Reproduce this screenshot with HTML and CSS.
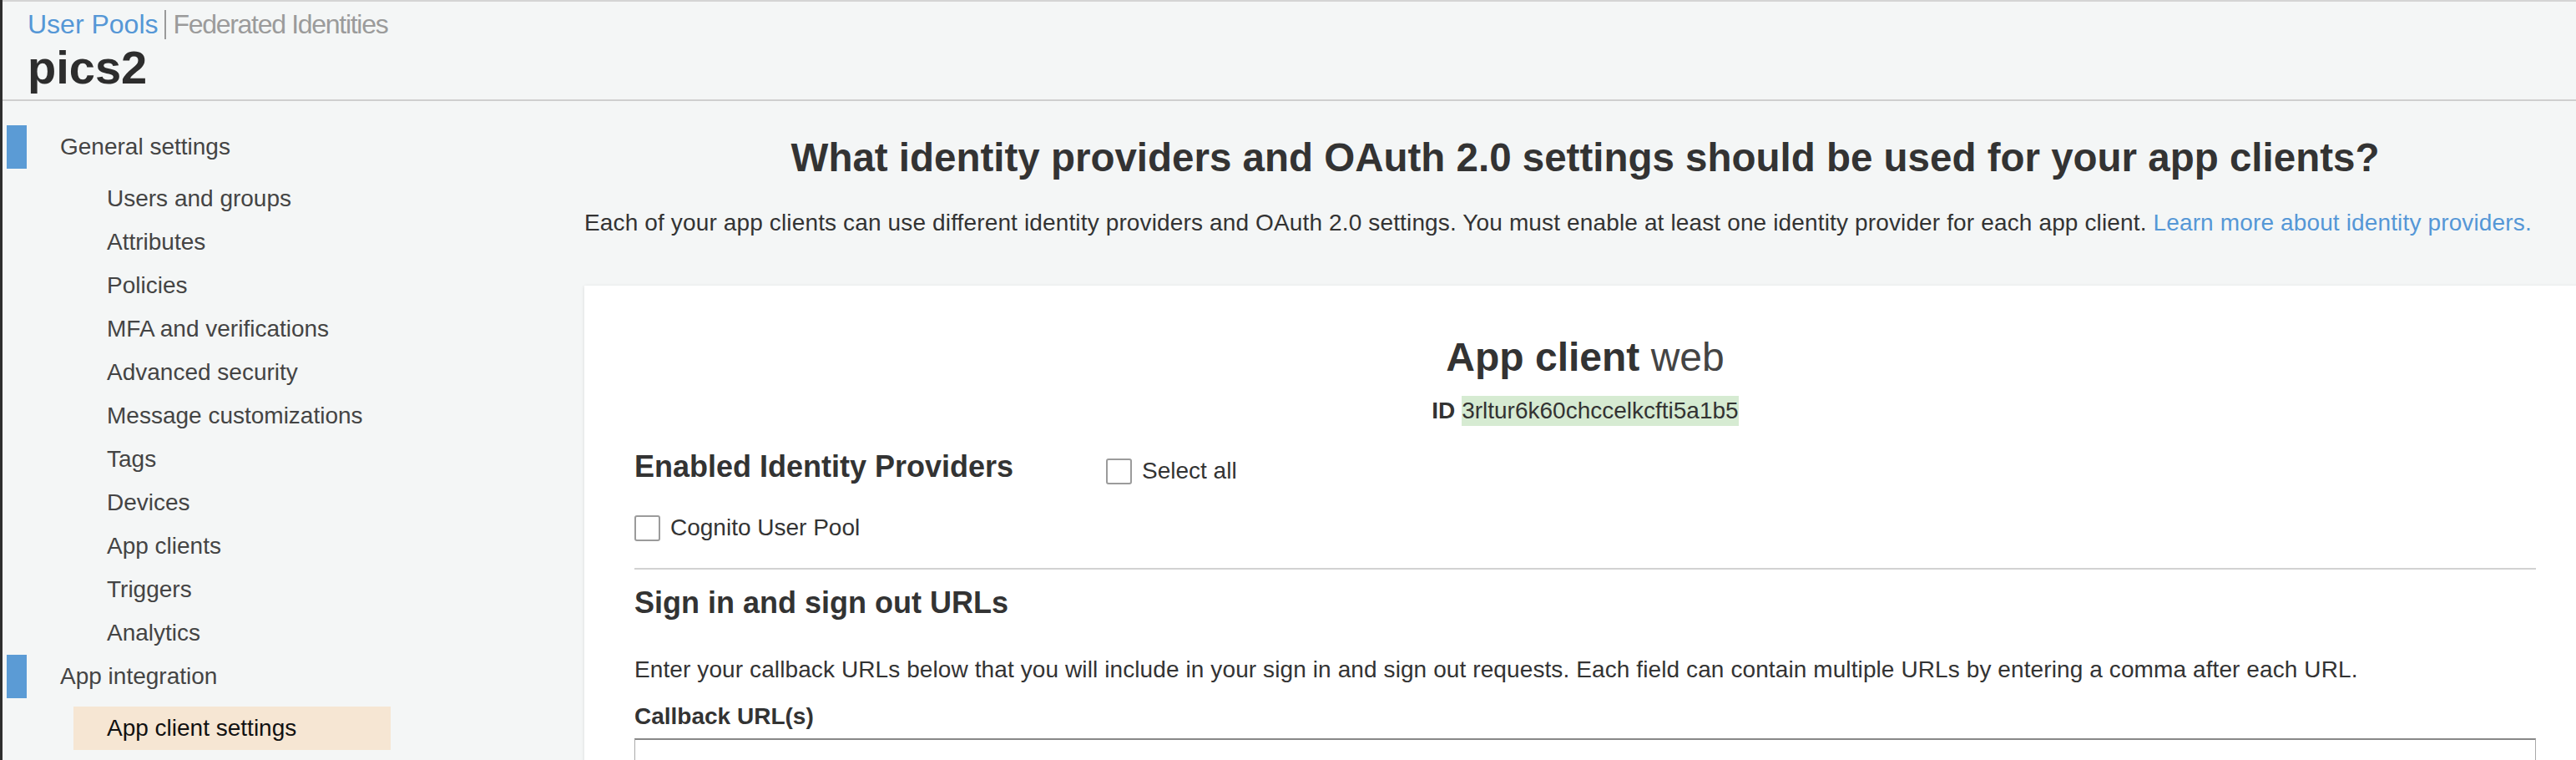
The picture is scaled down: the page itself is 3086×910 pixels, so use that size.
FILE: index.html
```html
<!DOCTYPE html>
<html lang="en">
<head>
<meta charset="utf-8">
<title>pics2 - App client settings</title>
<link rel="stylesheet" href="styles.css">
</head>
<body>
<div class="page">
  <header class="top">
    <div class="crumbs">
      <a class="crumb-active">User Pools</a><span class="crumb-sep"></span><span class="crumb">Federated Identities</span>
    </div>
    <h1 class="pool-name">pics2</h1>
  </header>
  <div class="layout">
    <nav class="sidebar">
      <div class="nav-section"><span class="nav-bar"></span><span class="nav-section-label">General settings</span></div>
      <ul class="nav-list">
        <li class="nav-item">Users and groups</li>
        <li class="nav-item">Attributes</li>
        <li class="nav-item">Policies</li>
        <li class="nav-item">MFA and verifications</li>
        <li class="nav-item">Advanced security</li>
        <li class="nav-item">Message customizations</li>
        <li class="nav-item">Tags</li>
        <li class="nav-item">Devices</li>
        <li class="nav-item">App clients</li>
        <li class="nav-item">Triggers</li>
        <li class="nav-item">Analytics</li>
      </ul>
      <div class="nav-section"><span class="nav-bar"></span><span class="nav-section-label">App integration</span></div>
      <ul class="nav-list">
        <li class="nav-item active">App client settings</li>
      </ul>
    </nav>
    <main class="main">
      <h2 class="page-title">What identity providers and OAuth 2.0 settings should be used for your app clients?</h2>
      <p class="page-desc">Each of your app clients can use different identity providers and OAuth 2.0 settings. You must enable at least one identity provider for each app client. <a class="link">Learn more about identity providers.</a></p>
      <section class="card">
        <h3 class="client-name"><strong>App client</strong> web</h3>
        <div class="client-id"><b>ID</b> <span class="id-value">3rltur6k60chccelkcfti5a1b5</span></div>
        <div class="idp-row">
          <h4 class="idp-title">Enabled Identity Providers</h4>
          <label class="check"><span class="box"></span>Select all</label>
        </div>
        <label class="check cognito"><span class="box"></span>Cognito User Pool</label>
        <hr class="divider">
        <h4 class="section-title">Sign in and sign out URLs</h4>
        <p class="help">Enter your callback URLs below that you will include in your sign in and sign out requests. Each field can contain multiple URLs by entering a comma after each URL.</p>
        <div class="field-label">Callback URL(s)</div>
        <div class="input"></div>
      </section>
    </main>
  </div>
</div>
</body>
</html>
```

FILE: styles.css
```css
html, body {
  margin: 0;
  padding: 0;
  overflow: hidden;
}

body {
  background: #f4f6f6;
  font-family: "Liberation Sans", Arial, Helvetica, sans-serif;
  color: #333;
}

.page {
  border-left: 3px solid #2e2e2e;
  min-height: 910px;
  box-sizing: border-box;
}

/* Header */
.top {
  border-top: 2px solid #d4d4d4;
  border-bottom: 2px solid #cfcfcf;
  padding: 7px 0 8px 30px;
}

.crumbs {
  display: flex;
  align-items: center;
  height: 40px;
  font-size: 32px;
  line-height: 40px;
}

.crumb-active {
  color: #5597d6;
}

.crumb-sep {
  width: 2px;
  height: 35px;
  background: #9a9a9a;
  margin: 0 9px 0 7px;
}

.crumb {
  color: #9b9b9b;
  letter-spacing: -1.3px;
}

.pool-name {
  margin: 2px 0 0;
  font-size: 56px;
  line-height: 60px;
  font-weight: bold;
  color: #2d2d2d;
}

/* Layout */
.layout {
  display: flex;
  width: 3095px;
}

/* Sidebar */
.sidebar {
  flex: none;
  width: 697px;
  padding: 29px 0 0 5px;
  box-sizing: border-box;
}

.nav-section {
  display: flex;
  align-items: center;
  height: 52px;
  margin-bottom: 10px;
  font-size: 28px;
  line-height: 52px;
  color: #444;
}

.nav-bar {
  flex: none;
  width: 24px;
  height: 52px;
  background: #5b9bd5;
  margin-right: 40px;
}

.nav-list {
  list-style: none;
  margin: 0;
  padding: 0;
}

.nav-item {
  margin-left: 80px;
  width: 380px;
  box-sizing: border-box;
  padding-left: 40px;
  height: 52px;
  line-height: 52px;
  font-size: 28px;
  color: #444;
}

.nav-item.active {
  background: #f6e6d3;
  color: #111;
}

/* Main */
.main {
  flex: none;
  width: 2398px;
  padding-top: 40px;
  box-sizing: border-box;
}

.page-title {
  margin: 0;
  text-align: center;
  font-size: 47.5px;
  line-height: 56px;
  font-weight: bold;
  color: #333;
}

.page-desc {
  margin: 30px 0 0;
  font-size: 28px;
  line-height: 40px;
  letter-spacing: 0.14px;
  color: #333;
}

.link {
  color: #5597d6;
  text-decoration: none;
}

.card {
  margin-top: 55px;
  background: #fff;
  box-shadow: 0 1px 4px rgba(0, 0, 0, 0.12);
  padding: 58px 60px 0;
  min-height: 800px;
}

.client-name {
  margin: 0;
  text-align: center;
  font-size: 48px;
  line-height: 56px;
  font-weight: normal;
  color: #444;
}

.client-name strong {
  font-weight: bold;
  color: #333;
}

.client-id {
  margin-top: 16px;
  text-align: center;
  font-size: 28px;
  line-height: 40px;
}

.id-value {
  display: inline-block;
  line-height: 36px;
  background: #d6ebd2;
}

.idp-row {
  display: flex;
  align-items: flex-start;
  margin-top: 25px;
}

.idp-title {
  flex: none;
  width: 565px;
  margin: 0;
  font-size: 36px;
  line-height: 44px;
  font-weight: bold;
}

.check {
  display: flex;
  align-items: center;
  gap: 12px;
  height: 32px;
  font-size: 28px;
  line-height: 32px;
  color: #333;
}

.idp-row .check {
  margin-top: 11px;
}

.box {
  flex: none;
  width: 31px;
  height: 31px;
  box-sizing: border-box;
  border: 2px solid #9b9b9b;
  border-radius: 3px;
  background: #fff;
}

.cognito {
  margin-top: 35px;
}

.divider {
  border: 0;
  height: 2px;
  background: #d2d2d2;
  margin: 32px 0 0;
}

.section-title {
  margin: 18px 0 0;
  font-size: 36px;
  line-height: 44px;
  font-weight: bold;
}

.help {
  margin: 38px 0 0;
  font-size: 28px;
  line-height: 40px;
  letter-spacing: 0.1px;
}

.field-label {
  margin-top: 16px;
  font-size: 28px;
  line-height: 40px;
  font-weight: bold;
}

.input {
  margin-top: 6px;
  height: 70px;
  border: 1px solid #aaa;
  border-top: 2px solid #888;
  background: #fff;
}
```
